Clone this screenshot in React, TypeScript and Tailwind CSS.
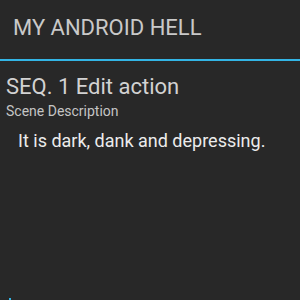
import React from 'react';

const App: React.FC = () => {
  return (
    <div className="w-[300px] h-[300px] bg-[#282828] overflow-hidden flex flex-col" style={{ fontFamily: 'Roboto, sans-serif' }}>
      {/* Action bar */}
      <div className="h-[59px] flex items-center pl-[13px] pb-[3px]">
        <span className="text-[22px] text-[#c9c9c9] leading-none">MY ANDROID HELL</span>
      </div>
      <div className="h-[2px] bg-[#33b5e5]" />

      {/* Content */}
      <div className="flex-1 flex flex-col px-[6px] pt-[15px]">
        <div className="text-[22px] leading-[22px] text-[#d2d2d2]">SEQ. 1 Edit action</div>
        <div className="text-[14px] leading-[14px] text-[#c4c4c4] mt-[6px]">Scene Description</div>
        <div className="text-[18px] leading-[18px] text-[#ececec] pl-[12px] mt-[14px]">It is dark, dank and depressing.</div>
        <div className="flex-1" />
        <div className="w-[2px] h-[2px] bg-[#33b5e5] ml-[3px]" />
      </div>
    </div>
  );
};

export default App;
